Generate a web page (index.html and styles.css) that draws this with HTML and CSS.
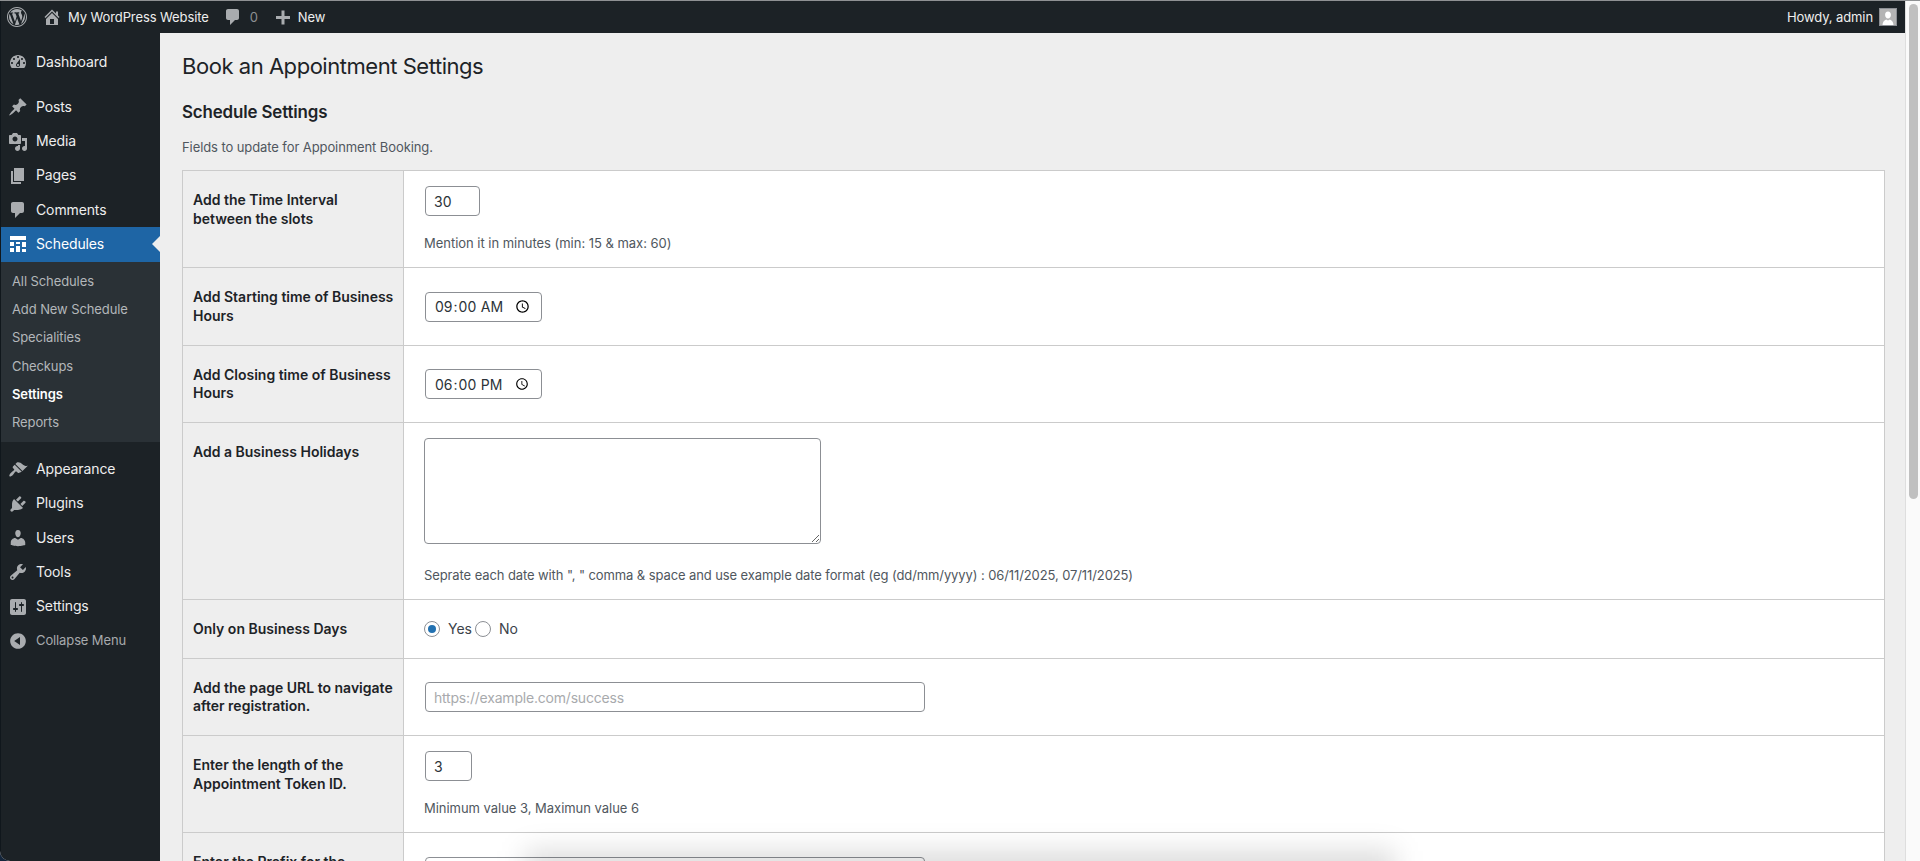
FILE: index.html
```html
<!DOCTYPE html>
<html lang="en">
<head>
  <meta charset="UTF-8">
  <meta name="viewport" content="width=device-width, initial-scale=1.0">
  <title>Book an Appointment Settings</title>
  <link rel="stylesheet" href="styles.css">
</head>
<body>
<div class="window">
  <div class="page">

    <!-- ADMIN BAR -->
    <div class="admin-bar">
      <svg class="bar-logo" viewBox="0 0 20 20"><path d="M20 10c0-5.52-4.48-10-10-10S0 4.48 0 10s4.48 10 10 10 10-4.48 10-10zM10 1.01c4.96 0 8.99 4.03 8.99 8.99s-4.03 8.99-8.99 8.99S1.01 14.96 1.01 10 5.04 1.01 10 1.01zM8.01 14.82L4.96 6.61c.49-.03 1.05-.08 1.05-.08.43-.05.38-1.01-.06-.99 0 0-1.29.1-2.13.1-.15 0-.33 0-.52-.01 1.44-2.17 3.9-3.6 6.7-3.6 2.09 0 3.99.79 5.41 2.09-.6-.08-1.45.35-1.45 1.42 0 .66.38 1.22.79 1.88.31.54.5 1.22.5 2.21 0 1.34-1.27 4.48-1.27 4.48l-2.71-7.5c.48-.03.75-.16.75-.16.43-.05.38-1.1-.05-1.08 0 0-1.3.11-2.14.11-.78 0-2.11-.11-2.11-.11-.43-.02-.48 1.06-.05 1.08l.84.08 1.12 3.04zm6.02 2.15L16.64 10s.67-1.69.39-3.81c.63 1.14.94 2.42.94 3.81 0 2.96-1.56 5.58-3.94 6.97zM2.68 6.77L6.5 17.25c-2.67-1.3-4.47-4.08-4.47-7.25 0-1.16.2-2.23.65-3.23zm7.45 4.53l2.29 6.25c-.75.27-1.57.42-2.42.42-.72 0-1.41-.11-2.06-.3z"/></svg>
      <svg class="bar-icon bar-home" viewBox="0 0 20 20"><path d="M16 8.5l1.53 1.53-1.06 1.06L10 4.62l-6.47 6.47-1.06-1.06L10 2.5l4 4v-2h2v4zm-6-2.46l6 5.99V18H4v-5.97zM12 17v-5H8v5h4z"/></svg>
      <span class="bar-text">My WordPress Website</span>
      <svg class="bar-icon bar-comments" viewBox="0 0 20 20"><path d="M5 2h9c1.1 0 2 .9 2 2v7c0 1.1-.9 2-2 2h-2l-5 5v-5H5c-1.1 0-2-.9-2-2V4c0-1.1.9-2 2-2z"/></svg>
      <span class="bar-count">0</span>
      <svg class="bar-icon bar-plus" viewBox="0 0 20 20"><path d="M17 9v3h-5.500v5.500h-3V12H3V9h5.500V3.500h3V9z"/></svg>
      <span class="bar-text">New</span>
      <span class="bar-text bar-howdy">Howdy, admin</span>
      <span class="avatar">
        <svg viewBox="0 0 16 16"><path d="M8 2.400c1.900 0 2.900 1.500 2.900 3.400S9.900 9.600 8 9.600 5.100 7.700 5.100 5.800 6.100 2.400 8 2.400zM2.500 16c0-3 2-4.800 3.700-5.400.5.500 1.100.8 1.800.8s1.300-.3 1.800-.8c1.700.6 3.700 2.400 3.700 5.400z"/></svg>
      </span>
    </div>

    <div class="admin-body">

      <!-- SIDEBAR -->
      <div class="sidebar">
        <a class="menu-item">
          <svg class="menu-icon" viewBox="0 0 20 20"><path d="M3.76 16h12.48c1.1-1.37 1.76-3.11 1.76-5 0-4.42-3.58-8-8-8s-8 3.58-8 8c0 1.89.66 3.63 1.76 5zM10 4c.55 0 1 .45 1 1s-.45 1-1 1-1-.45-1-1 .45-1 1-1zM6 6c.55 0 1 .45 1 1s-.45 1-1 1-1-.45-1-1 .45-1 1-1zm8 0c.55 0 1 .45 1 1s-.45 1-1 1-1-.45-1-1 .45-1 1-1zm-5.37 5.55L12 7v6c0 1.1-.9 2-2 2s-2-.9-2-2c0-.57.24-1.08.63-1.45zM4 10c.55 0 1 .45 1 1s-.45 1-1 1-1-.45-1-1 .45-1 1-1zm12 0c.55 0 1 .45 1 1s-.45 1-1 1-1-.45-1-1 .45-1 1-1zm-5 3c0-.55-.45-1-1-1s-1 .45-1 1 .45 1 1 1 1-.45 1-1z"/></svg>
          Dashboard
        </a>
        <div class="menu-separator"></div>
        <a class="menu-item">
          <svg class="menu-icon" viewBox="0 0 20 20"><path d="M10.44 3.02l1.82-1.82 6.36 6.35-1.83 1.82c-1.05-.68-2.48-.57-3.41.36l-.75.75c-.92.93-1.04 2.35-.35 3.41l-1.83 1.82-2.41-2.41-2.8 2.79c-.42.42-3.38 2.71-3.8 2.29s1.86-3.39 2.28-3.81l2.79-2.79L4.1 9.36l1.83-1.82c1.05.69 2.48.57 3.4-.36l.75-.75c.93-.92 1.05-2.35.36-3.41z"/></svg>
          Posts
        </a>
        <a class="menu-item">
          <svg class="menu-icon" viewBox="0 0 20 20"><path d="M13 11V4c0-.55-.45-1-1-1h-1.67L9 1H5L3.67 3H2c-.55 0-1 .45-1 1v7c0 .55.45 1 1 1h10c.55 0 1-.45 1-1zM7 4.500c1.380 0 2.500 1.120 2.500 2.500S8.380 9.500 7 9.500 4.500 8.380 4.500 7 5.620 4.500 7 4.500zM14 6h5v10.500c0 1.380-1.120 2.500-2.500 2.500S14 17.880 14 16.500s1.120-2.500 2.500-2.500c.170 0 .340.020.500.050V9h-3V6zm-4 8.050V13h2v3.500c0 1.380-1.120 2.500-2.500 2.500S7 17.880 7 16.500 8.120 14 9.500 14c.170 0 .340.020.500.050z"/></svg>
          Media
        </a>
        <a class="menu-item">
          <svg class="menu-icon" viewBox="0 0 20 20"><path d="M6 15V2h10v13H6zm-1 1h8v2H3V5h2v11z"/></svg>
          Pages
        </a>
        <a class="menu-item">
          <svg class="menu-icon" viewBox="0 0 20 20"><path d="M5 2h9c1.100 0 2 .9 2 2v7c0 1.100-.9 2-2 2h-2l-5 5v-5H5c-1.100 0-2-.9-2-2V4c0-1.100.9-2 2-2z"/></svg>
          Comments
        </a>
        <a class="menu-item active">
          <svg class="menu-icon" viewBox="0 0 20 20"><path d="M2 2h16v4H2V2zm0 10V8h4v4H2zm6-2V8h4v2H8zm6 3V8h4v5h-4zm-6 5v-6h4v6H8zm-6 0v-4h4v4H2zm12 0v-3h4v3h-4z"/></svg>
          Schedules
        </a>
        <ul class="submenu">
          <li>All Schedules</li>
          <li>Add New Schedule</li>
          <li>Specialities</li>
          <li>Checkups</li>
          <li class="current">Settings</li>
          <li>Reports</li>
        </ul>
        <div class="menu-separator"></div>
        <a class="menu-item">
          <svg class="menu-icon" viewBox="0 0 20 20"><path d="M14.480 11.060L7.410 3.990l1.500-1.500c.5-.56 2.300-.47 3.510.32 1.210.8 1.430 1.280 2.910 2.100 1.180.64 2.450 1.260 4.450.85zm-.71.71L6.700 4.700 4.930 6.470c-.39.39-.39 1.020 0 1.410l1.060 1.060c.39.39.39 1.030 0 1.420-.6.6-1.430 1.110-2.210 1.690-.35.260-.7.530-1.010.84-1.320 1.320-1.790 2.730-1.250 3.270s1.950.07 3.270-1.250c.31-.31.580-.66.840-1.010.58-.78 1.090-1.610 1.690-2.210.39-.39 1.030-.39 1.420 0l1.060 1.060c.39.39 1.020.39 1.410 0z"/></svg>
          Appearance
        </a>
        <a class="menu-item">
          <svg class="menu-icon" viewBox="0 0 20 20"><path d="M13.110 4.360L9.870 7.600 8 5.730l3.240-3.240c.35-.34 1.050-.2 1.560.32.52.51.66 1.210.31 1.550zm-8 1.770l.91-1.120 9.010 9.010-1.190.84c-.71.71-2.630 1.160-3.820 1.160H6.140L4.900 17.260c-.59.59-1.540.59-2.120 0-.59-.58-.59-1.530 0-2.120l1.240-1.240v-3.880c0-1.130.4-3.190 1.090-3.890zm7.260 3.970l3.240-3.240c.34-.35 1.040-.21 1.550.31.52.51.66 1.210.31 1.550l-3.240 3.250z"/></svg>
          Plugins
        </a>
        <a class="menu-item">
          <svg class="menu-icon" viewBox="0 0 20 20"><path d="M10 9.250c-2.270 0-2.730-3.440-2.730-3.440C7 4.020 7.820 2 9.970 2c2.160 0 2.980 2.020 2.710 3.810 0 0-.41 3.440-2.680 3.440zm0 2.570L12.720 10c2.390 0 4.520 2.330 4.520 4.530v2.490s-3.650 1.130-7.240 1.130c-3.650 0-7.240-1.130-7.240-1.130v-2.490c0-2.250 1.940-4.480 4.470-4.480z"/></svg>
          Users
        </a>
        <a class="menu-item">
          <svg class="menu-icon" viewBox="0 0 20 20"><path d="M16.680 9.770c-1.340 1.340-3.300 1.670-4.950.99l-5.410 6.520c-.99.99-2.590.99-3.580 0s-.99-2.590 0-3.570l6.520-5.420c-.68-1.650-.35-3.610.99-4.950 1.280-1.280 3.120-1.620 4.720-1.060l-2.890 2.890 2.820 2.820 2.860-2.870c.53 1.580.18 3.390-1.080 4.650zM3.810 16.210c.4.39 1.040.39 1.430 0 .4-.4.4-1.040 0-1.430-.39-.4-1.030-.4-1.430 0-.39.39-.39 1.030 0 1.430z"/></svg>
          Tools
        </a>
        <a class="menu-item">
          <svg class="menu-icon" viewBox="0 0 20 20"><path d="M18 16V4c0-1.100-.9-2-2-2H4c-1.100 0-2 .9-2 2v12c0 1.100.9 2 2 2h12c1.100 0 2-.9 2-2zM8 11h1c.55 0 1 .45 1 1s-.45 1-1 1H8v1.500c0 .28-.22.5-.5.5s-.5-.22-.5-.5V13H6c-.55 0-1-.45-1-1s.45-1 1-1h1V5.500c0-.28.22-.5.5-.5s.5.22.5.5V11zm5-2h-1c-.55 0-1-.45-1-1s.45-1 1-1h1V5.500c0-.28.22-.5.5-.5s.5.22.5.5V7h1c.55 0 1 .45 1 1s-.45 1-1 1h-1v5.500c0 .28-.22.5-.5.5s-.5-.22-.5-.5V9z"/></svg>
          Settings
        </a>
        <a class="menu-item collapse">
          <svg class="menu-icon" viewBox="0 0 20 20"><path d="M10 2.160c4.330 0 7.840 3.510 7.840 7.840s-3.510 7.840-7.840 7.840S2.160 14.330 2.160 10 5.710 2.160 10 2.160zm2 11.720V6.120L6.180 9.970z"/></svg>
          Collapse Menu
        </a>
      </div>

      <!-- CONTENT -->
      <div class="content">
        <h1>Book an Appointment Settings</h1>
        <h2>Schedule Settings</h2>
        <p class="intro">Fields to update for Appoinment Booking.</p>

        <table class="form-table">
          <tr>
            <th>Add the Time Interval between the slots</th>
            <td>
              <input type="number" class="field num-wide" value="30">
              <p class="description">Mention it in minutes (min: 15 &amp; max: 60)</p>
            </td>
          </tr>
          <tr>
            <th>Add Starting time of Business Hours</th>
            <td><input type="time" class="field time" value="09:00"></td>
          </tr>
          <tr>
            <th>Add Closing time of Business Hours</th>
            <td><input type="time" class="field time" value="18:00"></td>
          </tr>
          <tr>
            <th>Add a Business Holidays</th>
            <td>
              <textarea class="holidays"></textarea>
              <p class="description">Seprate each date with ", " comma &amp; space and use example date format (eg (dd/mm/yyyy) : 06/11/2025, 07/11/2025)</p>
            </td>
          </tr>
          <tr>
            <th>Only on Business Days</th>
            <td>
              <div class="radios">
                <label><input type="radio" name="business" checked>Yes</label>
                <label><input type="radio" name="business">No</label>
              </div>
            </td>
          </tr>
          <tr>
            <th>Add the page URL to navigate after registration.</th>
            <td><input type="text" class="field url" placeholder="https://example.com/success"></td>
          </tr>
          <tr>
            <th>Enter the length of the Appointment Token ID.</th>
            <td>
              <input type="number" class="field num-small" value="3">
              <p class="description">Minimum value 3, Maximun value 6</p>
            </td>
          </tr>
          <tr>
            <th>Enter the Prefix for the Appointment Token ID.</th>
            <td><input type="text" class="field url"></td>
          </tr>
        </table>
      </div>
    </div>
  </div>

  <!-- SCROLLBAR -->
  <div class="scrollbar"><div class="thumb"></div></div>

  <!-- shadow of the popup just below the window -->
  <div class="bottom-shadow"></div>
</div>
</body>
</html>
```

FILE: styles.css
```css
* { box-sizing: border-box; }
html { background: #14263c; }
body { margin: 0; height: 861px; overflow: hidden; font-family: Inter, "Liberation Sans", sans-serif; font-size: 13px; color: #1d2327; }

.window { position: relative; display: flex; height: 861px; overflow: hidden; background: #eeeeee; border-top: 1px solid #8f9193; border-bottom-left-radius: 10px; }
.page { flex: 1; min-width: 0; display: flex; flex-direction: column; border-left: 1px solid #10171c; }

/* ADMIN BAR */
.admin-bar { flex: none; height: 32px; display: flex; align-items: center; background: #1c2226; color: #eeeeee; padding-left: 6px; padding-right: 8px; letter-spacing: -.1px; }
.admin-bar svg { fill: currentColor; }
.bar-logo { width: 20px; height: 20px; color: #a9acaf; }
.bar-icon { width: 20px; height: 20px; color: #a9acaf; }
.bar-home { margin-left: 15px; }
.bar-text { margin-left: 5px; line-height: 32px; }
.bar-home + .bar-text { margin-left: 6px; }
.bar-comments { margin-left: 14px; }
.bar-count { margin-left: 7px; color: #8c8f92; }
.bar-plus { margin-left: 15px; }
.bar-howdy { margin-left: auto; }
.avatar { width: 18px; height: 18px; margin-left: 6px; border: 1px solid #8c8f94; background: #b4b4b4; display: block; overflow: hidden; }
.avatar svg { display: block; width: 16px; height: 16px; fill: #ffffff; }

.admin-body { flex: 1; min-height: 0; display: flex; }

/* SIDEBAR */
.sidebar { flex: none; width: 159px; background: #1c2226; padding-top: 12px; }
.menu-item { position: relative; display: flex; align-items: center; height: 34.25px; padding-bottom: 2px; font-size: 14px; letter-spacing: -.12px; color: #eeeeee; }
.menu-icon { flex: none; width: 20px; height: 20px; margin: 2px 8px 0 7px; fill: #a9acaf; }
.menu-separator { height: 11px; }
.menu-item.active { background: #1e65a5; color: #ffffff; }
.menu-item.active .menu-icon { fill: #ffffff; }
.menu-item.active::after { content: ""; position: absolute; right: 0; top: 50%; margin-top: -8px; border: 8px solid transparent; border-right-color: #eeeeee; border-left: 0; }
.menu-item.collapse { font-size: 13px; color: #a7aaad; }

.submenu { list-style: none; margin: 0; padding: 5px 0 5px; background: #2a3136; letter-spacing: -.1px; }
.submenu li { height: 28.35px; line-height: 28.35px; padding-left: 11px; color: #b3b7ba; }
.submenu li.current { color: #ffffff; font-weight: 600; }

/* CONTENT */
.content { flex: 1; min-width: 0; overflow: hidden; padding: 10px 20px 0 22px; }
h1 { margin: 0; padding: 9px 0 4px; font-size: 22px; font-weight: 400; line-height: 29.9px; letter-spacing: -.46px; }
h2 { margin: 15px 0 15px; font-size: 16.9px; font-weight: 600; line-height: 22px; letter-spacing: -.14px; }
.intro { margin: 0 0 13px; line-height: 19.5px; letter-spacing: -.09px; color: #50575e; }

.form-table { width: 100%; table-layout: fixed; border-collapse: collapse; border: 1px solid #cbcbcb; background: #ffffff; }
.form-table th { width: 221px; padding: 20px 5px 20px 10px; background: #eeeeee; border-right: 1px solid #cbcbcb; border-bottom: 1px solid #cbcbcb; vertical-align: top; text-align: left; font-size: 14px; font-weight: 600; line-height: 18.2px; }
.form-table td { padding: 15px 20px; border-bottom: 1px solid #cbcbcb; vertical-align: middle; font-size: 14px; }

.field { display: block; height: 30px; margin: 0 0 0 1px; padding: 0 8px; border: 1px solid #8c8f94; border-radius: 4px; background: #ffffff; color: #2c3338; font-family: inherit; font-size: 14px; }
.field::placeholder { color: #a8aaad; }
.num-wide { width: 55px; }
.num-small { width: 47px; }
.time { width: 117px; }
.url { width: 500px; letter-spacing: -.2px; }
.holidays { display: block; width: 397px; height: 106px; margin: 0; border: 1px solid #8c8f94; border-radius: 4px; background: #ffffff; }
.description { margin: 18px 0 0; font-size: 13px; line-height: 18px; letter-spacing: -.03px; color: #50575e; }
.holidays + .description { margin-top: 21.5px; letter-spacing: -.1px; }

.radios { display: flex; gap: 3px; }
.radios label { display: flex; align-items: center; line-height: 18px; color: #3c434a; }
.radios input { appearance: none; position: relative; width: 16px; height: 16px; margin: 0 8px 0 0; border: 1px solid #8c8f94; border-radius: 50%; background: #ffffff; }
.radios input:checked::before { content: ""; position: absolute; left: 3px; top: 3px; width: 8px; height: 8px; border-radius: 50%; background: #2271b1; }

/* SCROLLBAR */
.scrollbar { flex: none; width: 15px; background: #fafafa; border-left: 1px solid #dedede; padding: 3px 2px 0 3px; }
.thumb { height: 495px; border-radius: 5px; background: #c0c0c0; }

.bottom-shadow { position: absolute; left: 525px; bottom: -30px; width: 870px; height: 40px; background: rgba(0, 0, 0, .14); filter: blur(14px); }
```
